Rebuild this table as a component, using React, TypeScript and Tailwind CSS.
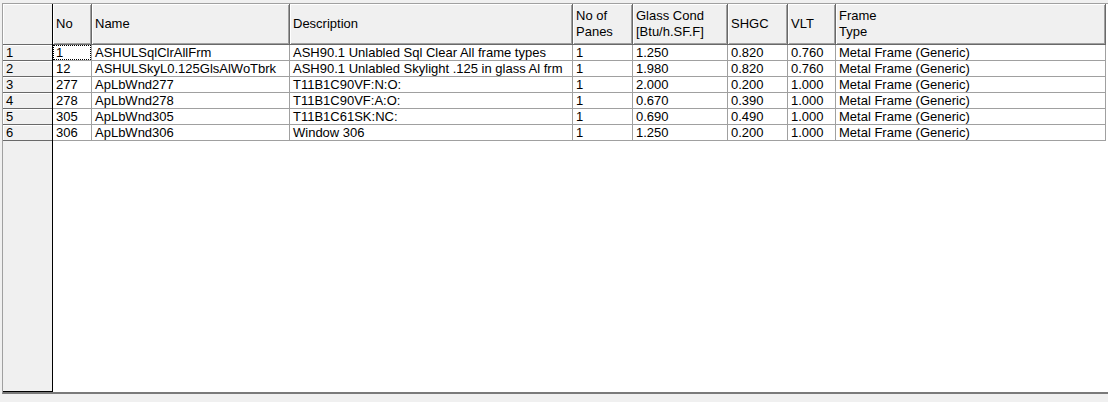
const columns = [
  { key: 'no', label: ['No'], w: 'w-[39px]' },
  { key: 'name', label: ['Name'], w: 'w-[198px]' },
  { key: 'desc', label: ['Description'], w: 'w-[283px]' },
  { key: 'panes', label: ['No of', 'Panes'], w: 'w-[60px]' },
  { key: 'cond', label: ['Glass Cond', '[Btu/h.SF.F]'], w: 'w-[95px]' },
  { key: 'shgc', label: ['SHGC'], w: 'w-[60px]' },
  { key: 'vlt', label: ['VLT'], w: 'w-[48px]' },
  { key: 'frame', label: ['Frame', 'Type'], w: 'w-[270px]' },
]

const rows = [
  ['1', 'ASHULSqlClrAllFrm', 'ASH90.1 Unlabled Sql Clear All frame types', '1', '1.250', '0.820', '0.760', 'Metal Frame (Generic)'],
  ['12', 'ASHULSkyL0.125GlsAlWoTbrk', 'ASH90.1 Unlabled Skylight .125 in glass Al frm', '1', '1.980', '0.820', '0.760', 'Metal Frame (Generic)'],
  ['277', 'ApLbWnd277', 'T11B1C90VF:N:O:', '1', '2.000', '0.200', '1.000', 'Metal Frame (Generic)'],
  ['278', 'ApLbWnd278', 'T11B1C90VF:A:O:', '1', '0.670', '0.390', '1.000', 'Metal Frame (Generic)'],
  ['305', 'ApLbWnd305', 'T11B1C61SK:NC:', '1', '0.690', '0.490', '1.000', 'Metal Frame (Generic)'],
  ['306', 'ApLbWnd306', 'Window 306', '1', '1.250', '0.200', '1.000', 'Metal Frame (Generic)'],
]

const headerCell =
  'h-[41px] shrink-0 flex flex-col justify-center pl-[3px] bg-[#f0f0f0] border-r border-b border-[#696969] shadow-[inset_1px_1px_0_#ffffff,inset_-1px_-1px_0_#a0a0a0] leading-[16px]'

export default function App() {
  return (
    <div
      className="w-[1108px] h-[402px] bg-[#f0f0f0] pt-[3px] pl-[2px] overflow-hidden text-[13px] text-black"
      style={{ fontFamily: '"Liberation Sans", Arial, sans-serif' }}
    >
      <div className="h-[391px] flex bg-white border-t border-l border-[#a0a0a0] border-b-2 border-b-[#7a7a7a] overflow-hidden">
        {/* row headers */}
        <div className="w-[50px] shrink-0 flex flex-col bg-[#f0f0f0] border-r border-b border-black">
          <div className="h-[41px] shrink-0 border-b border-[#696969] shadow-[inset_1px_1px_0_#ffffff]" />
          {rows.map((_, i) => (
            <div
              key={i}
              className="h-[16px] shrink-0 pl-[3px] leading-[15px] border-b border-[#696969] shadow-[inset_1px_1px_0_#ffffff]"
            >
              {i + 1}
            </div>
          ))}
        </div>

        {/* grid body */}
        <div className="flex flex-col">
          <div className="flex">
            {columns.map(c => (
              <div key={c.key} className={`${headerCell} ${c.w}`}>
                {c.label.map(l => (
                  <span key={l} className="whitespace-nowrap">{l}</span>
                ))}
              </div>
            ))}
          </div>
          {rows.map((r, i) => (
            <div key={i} className="flex">
              {r.map((v, j) => (
                <div
                  key={j}
                  className={`${columns[j].w} relative h-[16px] shrink-0 pl-[3px] leading-[15px] whitespace-nowrap overflow-hidden border-r border-b border-[#a0a0a0]`}
                >
                  {v}
                  {i === 0 && j === 0 && (
                    <span className="absolute inset-0 border border-dotted border-black" />
                  )}
                </div>
              ))}
            </div>
          ))}
        </div>
      </div>
    </div>
  )
}
